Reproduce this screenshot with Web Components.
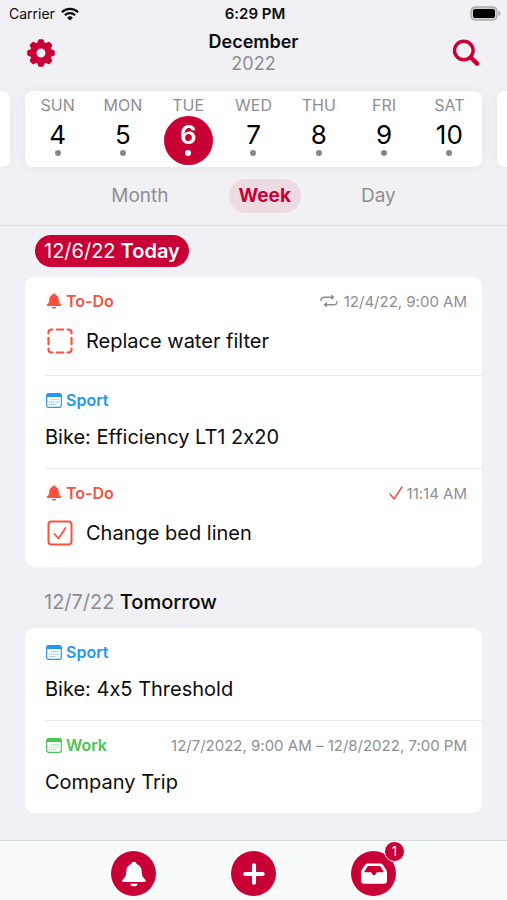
<!DOCTYPE html>
<html lang="en">
<head>
<meta charset="utf-8">
<meta name="viewport" content="width=device-width, initial-scale=1">
<title>Calendar</title>
<style>
  :root {
    --accent: #c90035;
    --bg: #f1f0f5;
    --muted: #8e8e92;
    --todo: #f9523f;
    --sport: #2497f0;
    --work: #4cc552;
  }

  body {
    margin: 0;
    background: var(--bg);
    color: #0c0c0e;
    font-family: Inter, "Liberation Sans", sans-serif;
    font-variant-ligatures: no-contextual;
  }
</style>
</head>
<body>
<calendar-app>
  <status-bar slot="header" carrier="Carrier" time="6:29 PM"></status-bar>
  <month-bar slot="header" month="December" year="2022"></month-bar>
  <week-strip slot="header">
    <week-day name="SUN" day="4"></week-day>
    <week-day name="MON" day="5"></week-day>
    <week-day name="TUE" day="6" selected></week-day>
    <week-day name="WED" day="7"></week-day>
    <week-day name="THU" day="8"></week-day>
    <week-day name="FRI" day="9"></week-day>
    <week-day name="SAT" day="10"></week-day>
  </week-strip>
  <view-switch slot="header" views="Month,Week,Day" current="Week"></view-switch>

  <day-section date="12/6/22" name="Today" today>
    <agenda-item kind="todo" category="To-Do" time="12/4/22, 9:00 AM" mark="repeat">Replace water filter</agenda-item>
    <agenda-item kind="sport" category="Sport">Bike: Efficiency LT1 2x20</agenda-item>
    <agenda-item kind="todo" category="To-Do" time="11:14 AM" mark="check" done>Change bed linen</agenda-item>
  </day-section>
  <day-section date="12/7/22" name="Tomorrow">
    <agenda-item kind="sport" category="Sport">Bike: 4x5 Threshold</agenda-item>
    <agenda-item kind="work" category="Work" time="12/7/2022, 9:00 AM – 12/8/2022, 7:00 PM">Company Trip</agenda-item>
  </day-section>

  <action-bar slot="footer">
    <action-button icon="bell" label="Reminders"></action-button>
    <action-button icon="plus" label="Add"></action-button>
    <action-button icon="tray" label="Inbox" badge="1"></action-button>
  </action-bar>
</calendar-app>

<script>
const bellShape = `
  <path d="M12 .8c1.300 0 2.200.8 2.400 2 3 1 4.600 3.500 4.700 6.800.1 3.600.8 5 2.800 6.900.7.700 1 1.100 1 1.700 0 .8-.6 1.200-1.400 1.200H2.500c-.8 0-1.400-.4-1.400-1.200 0-.6.3-1 1-1.700 2-1.900 2.700-3.300 2.800-6.900.1-3.300 1.700-5.800 4.700-6.800C9.800 1.600 10.700.8 12 .8z"/>
  <path d="M8.600 20.900h6.800c-.2 1.500-1.600 2.500-3.400 2.500s-3.200-1-3.400-2.500z"/>`;

// one tooth of the gear, turned round the hub
const teeth = [0, 45, 90, 135, 180, 225, 270, 315]
  .map((a) => `<path d="M11 1.700Q11.200.2 12.600.2h2.800Q16.800.2 17 1.700L18.400 6.500H9.600z" transform="rotate(${a} 14 14)"/>`)
  .join('');

const icons = {
  wifi: { box: '0 0 18 14', art: `
    <g fill="none" stroke="currentColor" stroke-width="2.300">
      <path d="M.9 5.200a11.500 11.500 0 0 1 16.200 0"/>
      <path d="M3.900 8.300a7.200 7.200 0 0 1 10.200 0"/>
    </g>
    <path d="M9 13.600 6.100 10.700a4.100 4.100 0 0 1 5.800 0z"/>` },
  battery: { box: '0 0 31 15', art: `
    <rect x="1" y="1" width="26" height="13" rx="4" fill="#d4d4d6" stroke="#a9a9ad" stroke-width="1.300"/>
    <rect x="3" y="3" width="22" height="9" rx="2" fill="#000"/>
    <path d="M28.500 5c1.300.3 2 1.200 2 2.500s-.7 2.200-2 2.500z" fill="#a9a9ad"/>` },
  gear: { box: '0 0 28 28', art: `
    ${teeth}
    <circle cx="14" cy="14" r="7.700" fill="none" stroke="currentColor" stroke-width="6.400"/>` },
  search: { box: '0 0 28 28', art: `
    <g fill="none" stroke="currentColor" stroke-linecap="round">
      <circle cx="11.800" cy="11.500" r="9.300" stroke-width="3.400"/>
      <path d="m19.500 19.200 5.600 5.400" stroke-width="4.400"/>
    </g>` },
  bell: { box: '0 0 24 24', art: bellShape },
  plus: { box: '0 0 24 24', art: `
    <path d="M12 4v16M4 12h16" fill="none" stroke="currentColor" stroke-width="3.800" stroke-linecap="round"/>` },
  tray: { box: '0 0 28 24', art: `
    <path fill-rule="evenodd" d="M7.800 1.500h12.400c1.300 0 2.200.5 2.900 1.500l3.200 5c.4.700.7 1.400.7 2.200v8.600c0 2-1 3-3 3H4c-2 0-3-1-3-3v-8.600c0-.8.3-1.500.7-2.200l3.200-5c.7-1 1.600-1.500 2.900-1.500zM7.900 4 4.500 9.300c-.3.500-.1.900.5.900h5.700c.6 0 .9.300 1 .8.300 1.300 1.100 2.100 2.300 2.100s2-.8 2.300-2.100c.1-.5.4-.8 1-.8H23c.6 0 .8-.4.5-.9L20.100 4z"/>` },
  calendar: { box: '0 0 16 15', art: `
    <rect x=".7" y=".7" width="14.600" height="13.600" rx="2" fill="none" stroke="currentColor" stroke-width="1.200"/>
    <path d="M.5 4V2.500C.5 1.200 1.300.5 2.500.5h11c1.200 0 2 .7 2 2V4z"/>
    <path d="M5 6.700h8M3 9.100h10M3 11.500h7" fill="none" stroke="currentColor" stroke-width=".9" stroke-dasharray="1.300 .5" opacity=".7"/>` },
  repeat: { box: '0 0 18 14', art: `
    <g fill="none" stroke="currentColor" stroke-width="1.400" stroke-linecap="round">
      <path d="M1 6.500C1 4.300 2.200 3.200 4.200 3.200h8"/>
      <path d="M17 7.500c0 2.200-1.200 3.300-3.200 3.300h-8"/>
    </g>
    <path d="M11 .5 14.700 3.200 11 5.900zM7 8.100 3.300 10.800 7 13.500z"/>` },
  check: { box: '0 0 14 14', art: `
    <path d="m1 8 4 5L13 1" fill="none" stroke="currentColor" stroke-width="1.500" stroke-linecap="round" stroke-linejoin="round"/>` },
  box: { box: '0 0 26 26', art: `
    <g fill="none" stroke="currentColor" stroke-width="2.200" stroke-linecap="round">
      <path d="M1.500 5.500v-1a3 3 0 0 1 3-3h1M20.500 1.500h1a3 3 0 0 1 3 3v1M24.500 20.500v1a3 3 0 0 1-3 3h-1M5.500 24.500h-1a3 3 0 0 1-3-3v-1"/>
      <path d="M9.800 1.500h6.400M9.800 24.500h6.400M1.500 9.800v6.400M24.500 9.800v6.400"/>
    </g>` },
  boxDone: { box: '0 0 26 26', art: `
    <g fill="none" stroke="currentColor" stroke-linecap="round" stroke-linejoin="round">
      <rect x="1.500" y="1.500" width="23" height="23" rx="3" stroke-width="2"/>
      <path d="m7.500 14 4 4.500 7-10.500" stroke-width="1.800"/>
    </g>` },
};

function icon(name, width, height = width) {
  const { box, art } = icons[name];
  return `<svg class="icon" viewBox="${box}" width="${width}" height="${height}" fill="currentColor" aria-hidden="true">${art}</svg>`;
}

class BaseElement extends HTMLElement {
  constructor() {
    super();
    this.shadowDOM = this.attachShadow({ mode: 'open' });
  }

  connectedCallback() {
    this.render();
  }

  attr(name) {
    return this.getAttribute(name) || '';
  }
}

class CalendarApp extends BaseElement {
  render() {
    this.shadowDOM.innerHTML = `
      <style>
        :host {
          display: flex;
          flex-direction: column;
          min-height: 100vh;
        }

        header {
          border-bottom: 1px solid #dfdfe4;
        }

        main {
          flex: 1;
          display: flex;
          flex-direction: column;
          gap: 19px;
          padding: 9px 25px 20px;
        }

        footer {
          position: sticky;
          bottom: 0;
        }
      </style>
      <header><slot name="header"></slot></header>
      <main><slot></slot></main>
      <footer><slot name="footer"></slot></footer>
    `;
  }
}

class StatusBar extends BaseElement {
  render() {
    this.shadowDOM.innerHTML = `
      <style>
        :host {
          display: grid;
          grid-template-columns: 1fr auto 1fr;
          align-items: center;
          height: 27px;
          padding: 0 6px 0 9px;
          font-size: 14px;
        }

        .carrier {
          display: flex;
          align-items: center;
          gap: 6px;
        }

        .time {
          font-size: 15px;
          font-weight: 600;
        }

        .battery {
          display: flex;
          justify-content: flex-end;
        }
      </style>
      <span class="carrier">${this.attr('carrier')}${icon('wifi', 18, 14)}</span>
      <span class="time">${this.attr('time')}</span>
      <span class="battery">${icon('battery', 31, 15)}</span>
    `;
  }
}

class MonthBar extends BaseElement {
  render() {
    this.shadowDOM.innerHTML = `
      <style>
        :host {
          display: flex;
          align-items: center;
          justify-content: space-between;
          padding: 4px 27px 16px;
        }

        button {
          display: flex;
          padding: 0;
          border: 0;
          background: none;
          color: var(--accent);
          cursor: pointer;
        }

        h1 {
          margin: 0;
          font-size: 18px;
          line-height: 22px;
          font-weight: 600;
          text-align: center;
        }

        h1 span {
          display: block;
          color: var(--muted);
          font-weight: 400;
        }
      </style>
      <button type="button" aria-label="Settings">${icon('gear', 28)}</button>
      <h1>${this.attr('month')}<span>${this.attr('year')}</span></h1>
      <button type="button" aria-label="Search">${icon('search', 28)}</button>
    `;
  }
}

class WeekStrip extends BaseElement {
  render() {
    this.shadowDOM.innerHTML = `
      <style>
        :host {
          display: flex;
          gap: 15px;
          height: 76px;
        }

        div {
          background: white;
          box-shadow: 0 0 12px rgba(0, 0, 30, 0.05);
        }

        .week {
          flex: 1;
          display: grid;
          grid-template-columns: repeat(7, 1fr);
          border-radius: 8px;
        }

        .previous, .next {
          flex: 0 0 10px;
        }

        .previous {
          border-radius: 0 8px 8px 0;
        }

        .next {
          border-radius: 8px 0 0 8px;
        }
      </style>
      <div class="previous"></div>
      <div class="week"><slot></slot></div>
      <div class="next"></div>
    `;
  }
}

class WeekDay extends BaseElement {
  render() {
    this.shadowDOM.innerHTML = `
      <style>
        :host {
          display: flex;
          justify-content: center;
        }

        button {
          display: flex;
          flex-direction: column;
          align-items: center;
          padding: 3px 0 0;
          border: 0;
          background: none;
          color: black;
          font: inherit;
          cursor: pointer;
        }

        .name {
          color: var(--muted);
          font-size: 16px;
          line-height: 22px;
        }

        .day {
          display: flex;
          flex-direction: column;
          align-items: center;
          box-sizing: border-box;
          width: 49px;
          height: 49px;
          padding-top: 4px;
          border-radius: 50%;
          font-size: 26px;
          line-height: 30px;
        }

        .day::after {
          content: "";
          width: 6px;
          height: 6px;
          border-radius: 50%;
          background: #88888b;
        }

        :host([selected]) .day {
          background: var(--accent);
          color: white;
          font-weight: 600;
        }

        :host([selected]) .day::after {
          background: white;
        }
      </style>
      <button type="button">
        <span class="name">${this.attr('name')}</span>
        <span class="day">${this.attr('day')}</span>
      </button>
    `;
  }
}

class ViewSwitch extends BaseElement {
  render() {
    const current = this.attr('current');
    const buttons = this.attr('views').split(',')
      .map((view) => `<button type="button" aria-pressed="${view === current}">${view}</button>`)
      .join('');

    this.shadowDOM.innerHTML = `
      <style>
        :host {
          display: flex;
          justify-content: center;
          gap: 50px;
          padding: 12px 0;
        }

        button {
          padding: 0 10px;
          border: 0;
          border-radius: 17px;
          background: none;
          color: var(--muted);
          font: inherit;
          font-size: 19px;
          line-height: 34px;
          cursor: pointer;
        }

        button[aria-pressed="true"] {
          background: #eedae2;
          color: var(--accent);
          font-weight: 700;
        }
      </style>
      ${buttons}
    `;
  }
}

class DaySection extends BaseElement {
  render() {
    this.shadowDOM.innerHTML = `
      <style>
        :host {
          display: block;
        }

        h2 {
          display: table;
          margin: 0 0 10px 10px;
          padding: 0 9px;
          border-radius: 16px;
          font-size: 20px;
          line-height: 32px;
          font-weight: 500;
        }

        .date {
          color: var(--muted);
          font-weight: 400;
        }

        :host([today]) h2 {
          background: var(--accent);
          color: white;
          font-weight: 600;
        }

        :host([today]) .date {
          color: white;
        }

        .card {
          border-radius: 9px;
          background: white;
        }
      </style>
      <h2><span class="date">${this.attr('date')}</span> ${this.attr('name')}</h2>
      <div class="card"><slot></slot></div>
    `;
  }
}

class AgendaItem extends BaseElement {
  render() {
    const isTodo = this.attr('kind') === 'todo';
    const done = this.hasAttribute('done');
    const mark = this.attr('mark');
    const markIcon = { repeat: () => icon('repeat', 18, 14), check: () => icon('check', 14) }[mark];

    const title = isTodo
      ? `<label class="title">
           <span class="tick">
             <input type="checkbox" ${done ? 'checked' : ''}>
             ${icon(done ? 'boxDone' : 'box', 26)}
           </span>
           <slot></slot>
         </label>`
      : '<div class="title"><slot></slot></div>';

    this.shadowDOM.innerHTML = `
      <style>
        :host {
          display: block;
          padding: 14px 15px 18px 0;
          margin-left: 20px;
          border-bottom: 1px solid #e9e9ec;
        }

        :host(:last-child) {
          border-bottom: 0;
        }

        :host([kind="todo"]) { --color: var(--todo); }
        :host([kind="sport"]) { --color: var(--sport); }
        :host([kind="work"]) { --color: var(--work); }

        .meta {
          display: flex;
          align-items: center;
          justify-content: space-between;
          height: 20px;
          margin-bottom: 14px;
          font-size: 15px;
        }

        .category, .time {
          display: flex;
          align-items: center;
          gap: 4px;
        }

        .category {
          color: var(--color);
          font-size: 16px;
          font-weight: 600;
          padding-left: 1px;
        }

        .time {
          color: var(--muted);
        }

        .time.repeat {
          gap: 6px;
        }

        .time.check .icon {
          color: var(--todo);
        }

        .title {
          display: flex;
          align-items: center;
          font-size: 20px;
          line-height: 26px;
        }

        label.title {
          height: 32px;
          gap: 13px;
          padding-left: 2px;
        }

        .tick {
          display: grid;
          color: var(--color);
        }

        .tick > * {
          grid-area: 1 / 1;
        }

        input {
          appearance: none;
          width: 26px;
          height: 26px;
          margin: 0;
        }
      </style>
      <div class="meta">
        <span class="category">${isTodo ? icon('bell', 16, 18) : icon('calendar', 16, 15)}${this.attr('category')}</span>
        <span class="time ${mark}">${markIcon ? markIcon() : ''}${this.attr('time')}</span>
      </div>
      ${title}
    `;
  }
}

class ActionBar extends BaseElement {
  render() {
    this.shadowDOM.innerHTML = `
      <style>
        :host {
          display: flex;
          justify-content: center;
          gap: 75px;
          padding: 10px 0 4px;
          border-top: 1px solid #dadade;
          background: #f9fafa;
        }
      </style>
      <slot></slot>
    `;
  }
}

class ActionButton extends BaseElement {
  render() {
    const badge = this.attr('badge');

    this.shadowDOM.innerHTML = `
      <style>
        :host {
          display: block;
          position: relative;
        }

        button {
          display: flex;
          align-items: center;
          justify-content: center;
          width: 45px;
          height: 45px;
          padding: 0;
          border: 0;
          border-radius: 50%;
          background: var(--accent);
          color: white;
          cursor: pointer;
        }

        .badge {
          position: absolute;
          top: -10px;
          right: -9px;
          width: 19px;
          border: 1px solid #f9fafa;
          border-radius: 50%;
          background: var(--accent);
          color: white;
          font-size: 13px;
          line-height: 19px;
          text-align: center;
        }
      </style>
      <button type="button" aria-label="${this.attr('label')}">${icon(this.attr('icon'), 28, 26)}</button>
      ${badge ? `<span class="badge">${badge}</span>` : ''}
    `;
  }
}

customElements.define('calendar-app', CalendarApp);
customElements.define('status-bar', StatusBar);
customElements.define('month-bar', MonthBar);
customElements.define('week-strip', WeekStrip);
customElements.define('week-day', WeekDay);
customElements.define('view-switch', ViewSwitch);
customElements.define('day-section', DaySection);
customElements.define('agenda-item', AgendaItem);
customElements.define('action-bar', ActionBar);
customElements.define('action-button', ActionButton);
</script>
</body>
</html>
